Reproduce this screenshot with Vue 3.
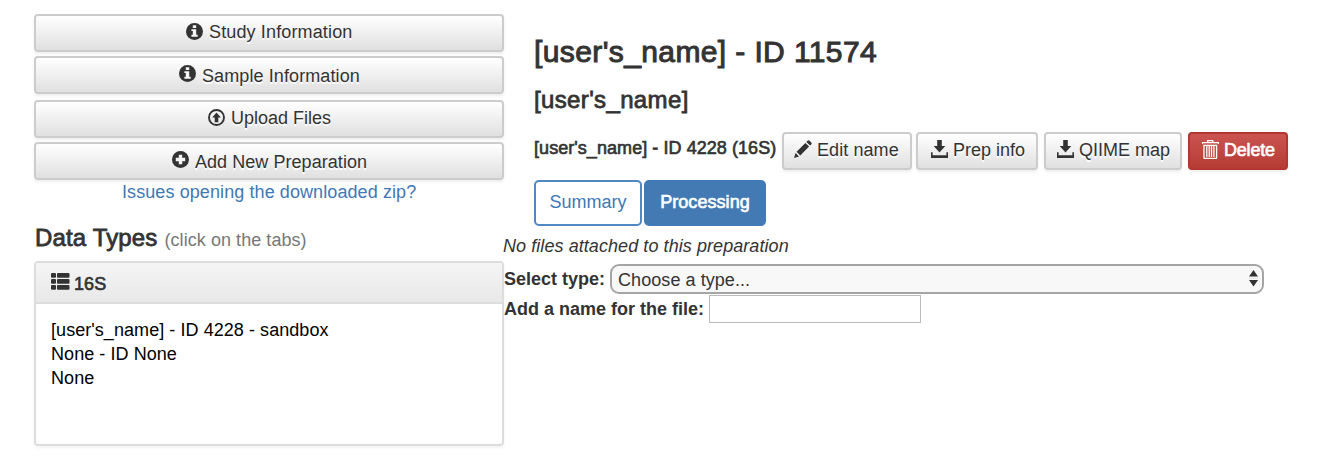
<script setup>
const menu = [
  { label: 'Study Information', icon: 'info', cls: 'study' },
  { label: 'Sample Information', icon: 'info', cls: 'sample' },
  { label: 'Upload Files', icon: 'upload', cls: 'upload' },
  { label: 'Add New Preparation', icon: 'plus', cls: 'add' },
]
const preparation = ["[user's_name] - ID 4228 - sandbox", 'None - ID None', 'None']
</script>

<template>
  <div class="page">
    <aside class="left">
      <button v-for="m in menu" :key="m.label" class="btn wide" :class="m.cls">
        <svg class="icon" viewBox="0 0 17 17" width="17" height="17">
          <template v-if="m.icon === 'info'">
            <circle cx="8.5" cy="8.5" r="8.5" fill="#333" />
            <path d="M6.8 2.3h3.4v2.6H6.8zM5.4 6.2h4.8v5.6h1.5v1.9H5.4v-1.9h1.4V8H5.4z" fill="#f6f6f6" />
          </template>
          <template v-else-if="m.icon === 'upload'">
            <circle cx="8.5" cy="8.5" r="7.5" fill="none" stroke="#333" stroke-width="1.9" />
            <path d="M8.5 3.4l4.4 5.1h-2.6v4.7H6.7V8.5H4.1z" fill="#333" />
          </template>
          <template v-else>
            <circle cx="8.5" cy="8.5" r="8.5" fill="#333" />
            <path d="M6.8 3.8h3.4v3h3v3.4h-3v3H6.8v-3h-3V6.8h3z" fill="#f4f4f4" />
          </template>
        </svg>
        <span>{{ m.label }}</span>
      </button>
      <a class="issues">Issues opening the downloaded zip?</a>
      <h3 class="types"><span class="types-name">Data Types</span><small>(click on the tabs)</small></h3>
      <section class="panel">
        <header>
          <svg class="list" viewBox="0 0 19 17" width="19" height="17" fill="#333">
            <rect x="0" y="0" width="5" height="4.8" rx="1" /><rect x="6" y="0" width="12.5" height="4.8" rx="1" />
            <rect x="0" y="6" width="5" height="4.8" rx="1" /><rect x="6" y="6" width="12.5" height="4.8" rx="1" />
            <rect x="0" y="12" width="5" height="4.8" rx="1" /><rect x="6" y="12" width="12.5" height="4.8" rx="1" />
          </svg>
          <span class="medium">16S</span>
        </header>
        <div class="body">
          <div v-for="p in preparation" :key="p">{{ p }}</div>
        </div>
      </section>
    </aside>

    <main class="right">
      <h2 class="title"><span>[user's_name] - ID 11574</span></h2>
      <h3 class="subtitle"><span>[user's_name]</span></h3>
      <div class="prep">
        <span class="prep-name medium">[user's_name] - ID 4228 (16S)</span>
        <button class="btn edit">
          <svg viewBox="0 0 18 18" width="18" height="18" fill="#333">
            <path d="M0 18l1.6-5 3.4 3.4zM2.6 11.7l8.8-8.8 3.7 3.7-8.8 8.8zM12.4 1.9l1.1-1.1q1-1 2.1 0l1.6 1.6q1 1.1 0 2.1l-1.1 1.1z" />
          </svg>
          <span>Edit name</span>
        </button>
        <button class="btn info">
          <svg viewBox="0 0 17 18" width="17" height="18" fill="#333">
            <path d="M6.2 0h4.6v6h3.5l-5.8 6.4L2.7 6h3.5zM0 12.3h1.6v2.9h13.8v-2.9H17V18H0z" />
          </svg>
          <span>Prep info</span>
        </button>
        <button class="btn map">
          <svg viewBox="0 0 17 18" width="17" height="18" fill="#333">
            <path d="M6.2 0h4.6v6h3.5l-5.8 6.4L2.7 6h3.5zM0 12.3h1.6v2.9h13.8v-2.9H17V18H0z" />
          </svg>
          <span>QIIME map</span>
        </button>
        <button class="btn danger">
          <svg viewBox="0 0 17 19" width="17" height="19" fill="none" stroke="#fff" stroke-width="1.3">
            <path d="M0.2 4V2.7h16.2V4M5.6 2.5V.7h5.2v1.8M2 5.3h12.6V18q0 .4-.5.4H2.5q-.5 0-.5-.4zM4.8 6v11M7.2 6v11M9.5 6v11M11.9 6v11" />
          </svg>
          <span class="medium">Delete</span>
        </button>
      </div>
      <nav class="tabs">
        <button class="tab">Summary</button>
        <button class="tab active"><span class="medium">Processing</span></button>
      </nav>
      <div class="form">
        <div class="empty">No files attached to this preparation</div>
        <div class="row select-row">
          <b>Select type:</b>
          <div class="select">
            <span>Choose a type...</span>
            <svg viewBox="0 0 9 17" width="9" height="17" fill="#333">
              <path d="M4.5 0L9 6.5H0zM0 10h9l-4.5 6.5z" /><path d="M0 7.7h9v.8H0z" fill="#ddd" />
            </svg>
          </div>
        </div>
        <div class="row name-row">
          <b>Add a name for the file:</b>
          <input class="name" type="text" />
        </div>
      </div>
    </main>
  </div>
</template>

<style>
body { background: #fff; }
</style>

<style scoped>
.page {
  display: flex;
  width: 1322px;
  height: 460px;
  overflow: hidden;
  box-sizing: border-box;
  font-family: "Liberation Sans", Arial, sans-serif;
  font-size: 18px;
  line-height: 24px;
  color: #333;
  background: #fff;
}
.page * { box-sizing: border-box; }
span, b, a, small { white-space: nowrap; }
svg { display: block; flex: none; }
h2, h3 { margin: 0; font-weight: 400; }
.medium { -webkit-text-stroke: 0.65px currentColor; letter-spacing: 0.06px; }
.left {
  display: flex;
  flex-direction: column;
  width: 470px;
  margin-left: 34px;
  padding-top: 14px;
}
.btn {
  display: flex;
  align-items: center;
  height: 38px;
  margin: 0;
  padding: 0;
  font: inherit;
  color: #333;
  border: 2px solid #ccc;
  border-radius: 4px;
  background: linear-gradient(#fff, #e0e0e0);
  box-shadow: 0 2px 3px rgba(0, 0, 0, 0.07);
  text-shadow: 0 2px 0 #fff;
}
.wide { width: 470px; flex: none; letter-spacing: 0.1px; align-items: flex-start; }
.study { padding: 4px 0 0 150px; letter-spacing: 0.14px; }
.sample { margin-top: 4px; padding: 6px 0 0 143px; }
.upload { margin-top: 6px; padding: 4px 0 0 172px; letter-spacing: 0; }
.add { margin-top: 4px; padding: 6px 0 0 136px; letter-spacing: 0.05px; }
.wide .icon { margin: 3px 6px 0 0; }
.sample .icon, .add .icon { margin-top: 0.5px; }
.issues {
  height: 24px;
  margin-left: 88px;
  color: #4078b4;
  letter-spacing: 0.09px;
}
.types {
  display: flex;
  align-items: baseline;
  height: 32px;
  margin-top: 18px;
  margin-left: 1px;
  font-size: 24px;
  line-height: 32px;
}
.types-name { letter-spacing: 0.15px; -webkit-text-stroke: 0.8px currentColor; }
.types small { margin-left: 7px; font-size: 18px; color: #777; letter-spacing: 0.06px; }
.panel {
  height: 185px;
  margin-top: 7px;
  border: 2px solid #ddd;
  border-radius: 4px;
  box-shadow: 0 2px 3px rgba(0, 0, 0, 0.05);
}
.panel header {
  display: flex;
  height: 41px;
  padding: 9px 0 0 15px;
  border-bottom: 2px solid #ddd;
  background: linear-gradient(#f5f5f5, #e8e8e8);
}
.list { margin: 1px 4px 0 0; }
.body { padding: 14px 15px; color: #000; letter-spacing: 0.06px; }
.right { width: 818px; }
.title {
  height: 40px;
  margin: 32px 0 0 30px;
  font-size: 30px;
  line-height: 40px;
  letter-spacing: 0.39px;
  -webkit-text-stroke: 1px currentColor;
}
.subtitle {
  height: 32px;
  margin: 12px 0 0 30px;
  font-size: 24px;
  line-height: 32px;
  letter-spacing: 0.36px;
  -webkit-text-stroke: 0.8px currentColor;
}
.prep { display: flex; margin: 16px 0 0 30px; height: 38px; }
.prep-name { width: 248px; padding-top: 4px; }
.prep .btn { flex: none; padding-bottom: 2px; }
.prep .btn svg { margin-top: -2px; }
.edit { width: 130px; padding-left: 10px; gap: 5px; letter-spacing: 0.08px; }
.info { width: 122px; margin-left: 4px; padding-left: 13px; gap: 5px; }
.map { width: 138px; margin-left: 6px; padding-left: 11px; gap: 5px; }
.danger {
  width: 100px;
  margin-left: 6px;
  padding-left: 12px;
  gap: 5px;
  color: #fff;
  border-color: #b33630;
  background: linear-gradient(#cb5450, #b63b35);
  text-shadow: none;
}
.danger .medium { letter-spacing: -0.2px; }
.tabs { display: flex; gap: 2px; margin: 10px 0 0 30px; height: 46px; }
.tab {
  width: 108px;
  height: 46px;
  padding: 0 0 2px;
  font: inherit;
  color: #4078b4;
  background: #fff;
  border: 2px solid #5088c3;
  border-radius: 5px;
}
.active { width: 122px; color: #fff; background: #447ab3; border-color: #447ab3; }
.empty { height: 24px; margin: 8px 0 0 -1px; font-style: italic; letter-spacing: 0.07px; }
.row { display: flex; }
.select-row { height: 30px; margin-top: 6px; line-height: 31px; }
.select {
  display: flex;
  justify-content: space-between;
  width: 654px;
  height: 30px;
  margin-left: 5px;
  padding: 0 4px 0 6px;
  line-height: 28px;
  letter-spacing: 0.06px;
  border: 2px solid #a5a5a5;
  border-radius: 9px;
  background: #f8f8f8;
}
.select svg { margin-top: 4px; }
.name-row { line-height: 31px; }
.name {
  width: 212px;
  height: 28px;
  margin: 1px 0 0 5px;
  padding: 0 4px;
  border: 1px solid #bbb;
  background: #fff;
  outline: none;
}
</style>
